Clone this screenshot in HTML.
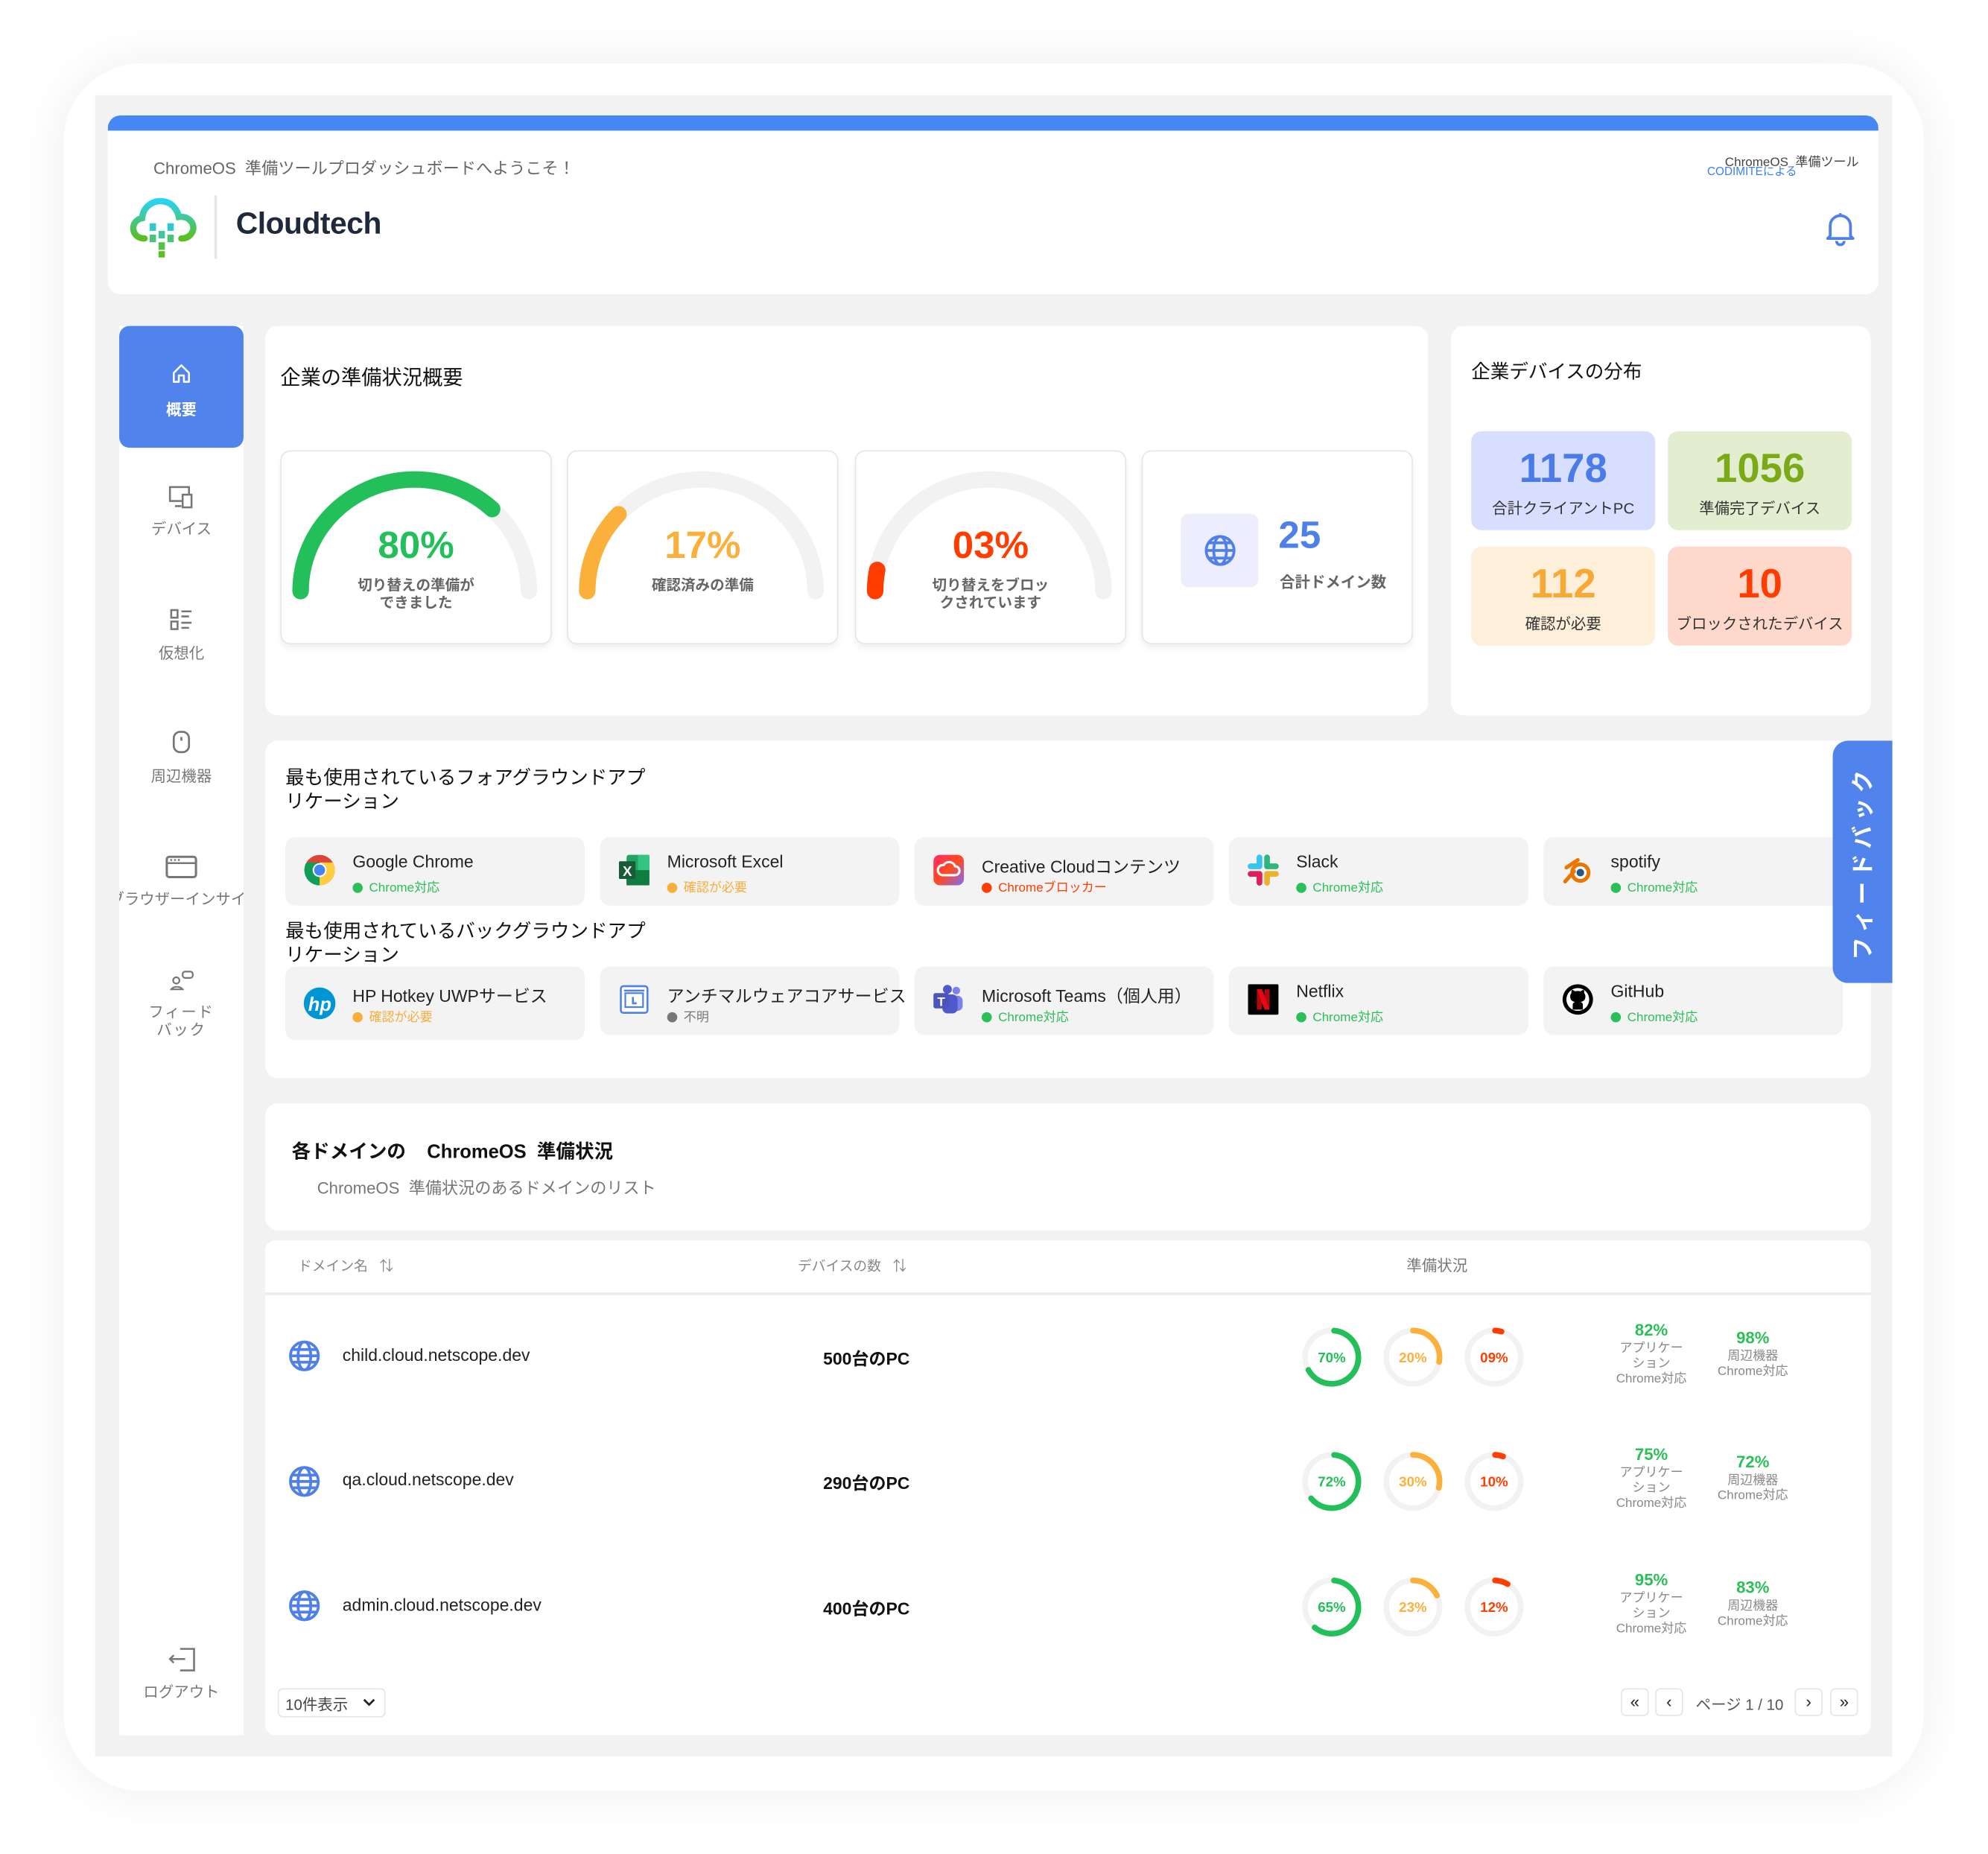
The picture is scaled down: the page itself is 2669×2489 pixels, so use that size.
<!DOCTYPE html>
<html><head><meta charset="utf-8">
<style>
*{margin:0;padding:0;box-sizing:border-box}
html,body{width:2669px;height:2489px;overflow:hidden;background:#fff}
body{font-family:"Liberation Sans","Noto Sans CJK JP",sans-serif;color:#222}
#st{position:absolute;left:0;top:0;width:1563px;height:1458px;transform:scale(1.7028);transform-origin:0 0}
.a{position:absolute}
.card{position:absolute;background:#fff;border-radius:10px}
.t{position:absolute;white-space:nowrap}
.g{position:absolute;top:355px;width:214px;height:153px;border:1px solid #e6e6e6;border-radius:8px;background:#fff;box-shadow:0 3px 5px rgba(0,0,0,.06)}
.g .p{position:absolute;left:0;width:100%;text-align:center;top:58px;font-size:30px;font-weight:bold}
.g .l{position:absolute;left:0;width:100%;text-align:center;top:99px;font-size:11.5px;color:#666;font-weight:bold;line-height:14px}
.tile{position:absolute;width:145px;height:78px;border-radius:8px;text-align:center}
.tile b{display:block;font-size:32px;margin-top:10px;line-height:38px}
.tile span{display:block;font-size:12px;color:#333;margin-top:4px}
.app{position:absolute;width:236px;background:#f3f3f3;border-radius:8px}
.app .n{position:absolute;left:53px;top:12px;font-size:13.5px;color:#222;white-space:nowrap}
.app .s{position:absolute;left:53px;top:31px;font-size:10px;white-space:nowrap}
.app .s i{display:inline-block;width:8px;height:8px;border-radius:50%;margin-right:5px;vertical-align:-1px}
.app svg{position:absolute;left:14px;top:13px}
.gr{color:#2bbf57}.gr i{background:#2bbf57}
.or{color:#f9ad3a}.or i{background:#f9ad3a}
.rd{color:#ff3d00}.rd i{background:#ff3d00}
.gy{color:#777}.gy i{background:#777}
.nav{position:absolute;left:94px;width:98px;text-align:center;font-size:12px;color:#777}
.st{position:absolute;text-align:center;font-size:10px;color:#888;line-height:12px;width:70px}
.st b{display:block;font-size:13px;color:#2bbf57;margin-bottom:3px}
.pg{position:absolute;top:1331px;width:22px;height:22px;border:1px solid #e6e6e6;border-radius:4px;text-align:center;font-size:13px;line-height:20px;color:#222;background:#fff}
</style></head><body>
<div id="st">
<div class="a" style="left:50px;top:50px;width:1467px;height:1362px;border-radius:62px;background:#fff;box-shadow:0 0 40px rgba(0,0,0,.07)"></div>
<div class="a" style="left:75px;top:75px;width:1417px;height:1310px;background:#f2f2f2"></div>

<div class="card" style="left:85px;top:91px;width:1396px;height:141px;overflow:hidden">
  <div class="a" style="left:0;top:0;width:100%;height:12px;background:#4487f5"></div>
</div>
<div class="t" style="left:121px;top:122px;font-size:13px;color:#666">ChromeOS &nbsp;準備ツールプロダッシュボードへようこそ！</div>
<svg class="a" style="left:100px;top:154px" width="56" height="50" viewBox="0 0 56 50">
 <defs><linearGradient id="lg" x1="0" y1="0" x2="0" y2="1"><stop offset="0" stop-color="#29d3f2"/><stop offset="1" stop-color="#5cbe21"/></linearGradient></defs>
 <path d="M14 34 C3 34 2 20 12 18 C13 8 22 3 30 5 C36 6 40 12 41 17 C50 16 55 24 51 30 C49 33 46 34 43 34" fill="none" stroke="url(#lg)" stroke-width="5" stroke-linecap="round"/>
 <rect x="18" y="22" width="5" height="6" fill="#32c8d0"/><rect x="32" y="22" width="5" height="6" fill="#32c8d0"/>
 <rect x="25" y="28" width="5" height="6" fill="#3fc7a0"/><rect x="18" y="31" width="5" height="6" fill="#47c479"/><rect x="32" y="31" width="5" height="6" fill="#47c479"/>
 <rect x="25" y="37" width="5" height="6" fill="#56c04a"/><rect x="25" y="44" width="5" height="5" fill="#5cbe21"/>
</svg>
<div class="a" style="left:169px;top:154px;width:2px;height:50px;background:#e5e5e5"></div>
<div class="t" style="left:186px;top:163px;font-size:24px;color:#1e2a3b;font-weight:bold;letter-spacing:-.3px">Cloudtech</div>
<div class="t" style="left:1360px;top:119px;font-size:10px;color:#444">ChromeOS &nbsp;準備ツール</div>
<div class="t" style="left:1346px;top:128px;font-size:9px;color:#3b7ff0">CODIMITEによる</div>
<svg class="a" style="left:1438px;top:166px" width="26" height="28" viewBox="0 0 26 28"><path d="M5 20 V12 A8 8 0 0 1 21 12 V20 L23 22 H3 Z" fill="none" stroke="#4f80ea" stroke-width="2.2" stroke-linejoin="round"/><path d="M10 24 A3 3 0 0 0 16 24" fill="none" stroke="#4f80ea" stroke-width="2.2"/><path d="M13 2v2" stroke="#4f80ea" stroke-width="2"/></svg>

<div class="a" style="left:94px;top:257px;width:98px;height:1111px;background:#fff"></div>
<div class="a" style="left:94px;top:257px;width:98px;height:96px;background:#5083ec;border-radius:8px"></div>
<svg class="a" style="left:135px;top:286px" width="16" height="16" viewBox="0 0 16 16"><path d="M2 8 L8 2 L14 8 V15 H10 V10 H6 V15 H2 Z" fill="none" stroke="#fff" stroke-width="1.5" stroke-linejoin="round"/></svg>
<div class="nav" style="top:314px;color:#fff;font-weight:bold">概要</div>
<svg class="a" style="left:133px;top:383px" width="20" height="18" viewBox="0 0 20 18"><rect x="1" y="1" width="15" height="11" fill="none" stroke="#777" stroke-width="1.5"/><rect x="11" y="7" width="7" height="10" fill="#fff" stroke="#777" stroke-width="1.5"/><path d="M5 16h5" stroke="#777" stroke-width="1.5"/></svg>
<div class="nav" style="top:408px">デバイス</div>
<svg class="a" style="left:134px;top:480px" width="18" height="18" viewBox="0 0 18 18"><rect x="1" y="1" width="5" height="6" fill="none" stroke="#777" stroke-width="1.5"/><rect x="1" y="10" width="5" height="6" fill="none" stroke="#777" stroke-width="1.5"/><path d="M9 2h8M9 6h6M9 11h8M9 15h6" stroke="#777" stroke-width="1.5"/></svg>
<div class="nav" style="top:506px">仮想化</div>
<svg class="a" style="left:135px;top:576px" width="16" height="18" viewBox="0 0 16 18"><rect x="2" y="1" width="12" height="16" rx="5" fill="none" stroke="#777" stroke-width="1.6"/><path d="M8 5v3" stroke="#777" stroke-width="1.6"/></svg>
<div class="nav" style="top:603px">周辺機器</div>
<svg class="a" style="left:130px;top:674px" width="26" height="20" viewBox="0 0 26 20"><rect x="1.5" y="1.5" width="23" height="16" rx="2" fill="none" stroke="#777" stroke-width="1.8"/><path d="M1.5 6.5h23" stroke="#777" stroke-width="1.5"/><circle cx="5" cy="4" r=".8" fill="#777"/><circle cx="8" cy="4" r=".8" fill="#777"/><circle cx="11" cy="4" r=".8" fill="#777"/></svg>
<div class="a" style="left:94px;top:699px;width:98px;height:18px;overflow:hidden"><div class="t" style="left:-8px;top:1px;font-size:12px;color:#777">ブラウザーインサイト</div></div>
<svg class="a" style="left:134px;top:764px" width="20" height="18" viewBox="0 0 20 18"><circle cx="5" cy="9" r="2.5" fill="none" stroke="#777" stroke-width="1.3"/><path d="M1 16 A5 3.5 0 0 1 10 16 Z" fill="none" stroke="#777" stroke-width="1.3"/><rect x="10" y="2" width="8" height="5" rx="2" fill="none" stroke="#777" stroke-width="1.3"/></svg>
<div class="nav" style="top:791px;line-height:14px;letter-spacing:1px">フィード<br>バック</div>
<svg class="a" style="left:133px;top:1298px" width="22" height="20" viewBox="0 0 22 20"><path d="M9 2h11v17H9" fill="none" stroke="#777" stroke-width="1.5"/><path d="M1 10h12M4 7l-3 3 3 3" fill="none" stroke="#777" stroke-width="1.5"/></svg>
<div class="nav" style="top:1325px">ログアウト</div>

<div class="card" style="left:209px;top:257px;width:917px;height:307px"></div>
<div class="t" style="left:221px;top:284px;font-size:16px;color:#111">企業の準備状況概要</div>

<div class="g" style="left:221px">
 <svg class="a" style="left:0;top:0" width="214" height="153"><path d="M15 110 A90 88 0 0 1 195 110" fill="none" stroke="#f2f2f2" stroke-width="13" stroke-linecap="round"/><path d="M15 110 A90 88 0 0 1 195 110" pathLength="100" fill="none" stroke="#23bf5a" stroke-width="13" stroke-linecap="round" stroke-dasharray="74 200"/></svg>
 <div class="p" style="color:#23bf5a">80%</div><div class="l">切り替えの準備が<br>できました</div></div>
<div class="g" style="left:447px">
 <svg class="a" style="left:0;top:0" width="214" height="153"><path d="M15 110 A90 88 0 0 1 195 110" fill="none" stroke="#f2f2f2" stroke-width="13" stroke-linecap="round"/><path d="M15 110 A90 88 0 0 1 195 110" pathLength="100" fill="none" stroke="#fbb03b" stroke-width="13" stroke-linecap="round" stroke-dasharray="24 200"/></svg>
 <div class="p" style="color:#fbb03b">17%</div><div class="l">確認済みの準備</div></div>
<div class="g" style="left:674px">
 <svg class="a" style="left:0;top:0" width="214" height="153"><path d="M15 110 A90 88 0 0 1 195 110" fill="none" stroke="#f2f2f2" stroke-width="13" stroke-linecap="round"/><path d="M15 110 A90 88 0 0 1 195 110" pathLength="100" fill="none" stroke="#ff3d00" stroke-width="13" stroke-linecap="round" stroke-dasharray="6 200"/></svg>
 <div class="p" style="color:#ff3d00">03%</div><div class="l">切り替えをブロッ<br>クされています</div></div>
<div class="g" style="left:900px">
 <div class="a" style="left:30px;top:49px;width:61px;height:58px;border-radius:6px;background:#eeedfd"></div>
 <svg class="a" style="left:48px;top:65px" width="26" height="26" viewBox="0 0 26 26"><g fill="none" stroke="#4f80ea" stroke-width="2.2"><circle cx="13" cy="13" r="11"/><ellipse cx="13" cy="13" rx="5" ry="11"/><path d="M2 13h22M4 7h18M4 19h18"/></g></svg>
 <div class="t" style="left:107px;top:50px;font-size:30px;font-weight:bold;color:#4f80ea">25</div>
 <div class="t" style="left:108px;top:94px;font-size:12px;color:#666;font-weight:bold">合計ドメイン数</div>
</div>

<div class="card" style="left:1144px;top:257px;width:331px;height:307px"></div>
<div class="t" style="left:1160px;top:282px;font-size:15px;color:#111">企業デバイスの分布</div>
<div class="tile" style="left:1160px;top:340px;background:#d7defe"><b style="color:#4a7be8">1178</b><span>合計クライアントPC</span></div>
<div class="tile" style="left:1315px;top:340px;background:#e3eed1"><b style="color:#7aab16">1056</b><span>準備完了デバイス</span></div>
<div class="tile" style="left:1160px;top:431px;background:#fdefd9"><b style="color:#f7a935">112</b><span>確認が必要</span></div>
<div class="tile" style="left:1315px;top:431px;background:#fdd8cb"><b style="color:#ff3d00">10</b><span>ブロックされたデバイス</span></div>

<div class="card" style="left:209px;top:584px;width:1266px;height:266px"></div>
<div class="t" style="left:225px;top:604px;font-size:15px;color:#111;line-height:19px">最も使用されているフォアグラウンドアプ<br>リケーション</div>
<div class="t" style="left:225px;top:725px;font-size:15px;color:#111;line-height:19px">最も使用されているバックグラウンドアプ<br>リケーション</div>

<div class="app" style="left:225px;top:660px;height:54px">
 <svg width="26" height="26" viewBox="0 0 26 26"><circle cx="13" cy="13" r="12" fill="#db4437"/><path d="M13 13 L2.6 19 A12 12 0 0 0 13 25 Z" fill="#0f9d58"/><path d="M13 13 L2.6 19 A12 12 0 0 1 2.6 7 L13 7 Z" fill="#0f9d58"/><path d="M13 13 L13 25 A12 12 0 0 0 23.4 7 L13 7Z" fill="#ffcd40"/><circle cx="13" cy="13" r="5.5" fill="#fff"/><circle cx="13" cy="13" r="4.3" fill="#4285f4"/></svg>
 <div class="n">Google Chrome</div><div class="s gr"><i></i>Chrome対応</div></div>
<div class="app" style="left:473px;top:660px;height:54px">
 <svg width="26" height="26" viewBox="0 0 26 26"><rect x="7" y="1" width="18" height="24" rx="2" fill="#21a366"/><rect x="7" y="13" width="18" height="12" fill="#107c41"/><rect x="16" y="1" width="9" height="12" fill="#33c481"/><rect x="1" y="6" width="13" height="14" rx="1" fill="#185c37"/><text x="4" y="17.5" font-size="11" fill="#fff" font-family="Liberation Sans" font-weight="bold">X</text></svg>
 <div class="n">Microsoft Excel</div><div class="s or"><i></i>確認が必要</div></div>
<div class="app" style="left:721px;top:660px;height:54px">
 <svg width="26" height="26" viewBox="0 0 26 26"><defs><linearGradient id="cc" x1="0" y1="0" x2="1" y2="1"><stop offset="0" stop-color="#ff2a6a"/><stop offset=".5" stop-color="#ff4b1f"/><stop offset="1" stop-color="#7b6cff"/></linearGradient></defs><rect x="1" y="1" width="24" height="24" rx="5" fill="url(#cc)"/><path d="M8 17 A4 4 0 0 1 9 9 A5 5 0 0 1 18 10 A3.5 3.5 0 0 1 18 17 Z" fill="none" stroke="#fff" stroke-width="1.8"/></svg>
 <div class="n">Creative Cloudコンテンツ</div><div class="s rd"><i></i>Chromeブロッカー</div></div>
<div class="app" style="left:969px;top:660px;height:54px">
 <svg width="26" height="26" viewBox="0 0 26 26"><g stroke-linecap="round" stroke-width="4.5"><path d="M10 3v7" stroke="#36c5f0"/><path d="M3 10h7" stroke="#36c5f0"/><path d="M16 3v7" stroke="#2eb67d"/><path d="M16 10h7" stroke="#2eb67d"/><path d="M3 16h7" stroke="#e01e5a"/><path d="M10 16v7" stroke="#e01e5a"/><path d="M16 16h7" stroke="#ecb22e"/><path d="M16 16v7" stroke="#ecb22e"/></g></svg>
 <div class="n">Slack</div><div class="s gr"><i></i>Chrome対応</div></div>
<div class="app" style="left:1217px;top:660px;height:54px">
 <svg width="26" height="26" viewBox="0 0 26 26"><circle cx="15" cy="15" r="8" fill="#ea7600"/><circle cx="15" cy="15" r="5" fill="#fff"/><circle cx="15" cy="15" r="3" fill="#265787"/><path d="M4 11 L13 5 M3 22 L10 14" stroke="#ea7600" stroke-width="3" stroke-linecap="round"/></svg>
 <div class="n">spotify</div><div class="s gr"><i></i>Chrome対応</div></div>

<div class="app" style="left:225px;top:762px;height:58px">
 <svg width="26" height="28" viewBox="0 0 26 28" style="top:15px"><circle cx="13" cy="14" r="12.5" fill="#0096d6"/><text x="4" y="20" font-size="15" font-style="italic" font-weight="bold" fill="#fff" font-family="Liberation Sans">hp</text></svg>
 <div class="n">HP Hotkey UWPサービス</div><div class="s or"><i></i>確認が必要</div></div>
<div class="app" style="left:473px;top:762px;height:54px">
 <svg width="26" height="26" viewBox="0 0 26 26"><rect x="2.5" y="2.5" width="21" height="21" rx="2" fill="#fff" stroke="#4f80ea" stroke-width="1.5"/><rect x="6" y="8" width="14" height="11" fill="none" stroke="#4f80ea" stroke-width="1.3"/><path d="M5 6h16" stroke="#4f80ea" stroke-width="1.5"/><path d="M12 11v5h3" fill="none" stroke="#4f80ea" stroke-width="1.5"/></svg>
 <div class="n">アンチマルウェアコアサービス</div><div class="s gy"><i></i>不明</div></div>
<div class="app" style="left:721px;top:762px;height:54px">
 <svg width="26" height="26" viewBox="0 0 26 26"><circle cx="19" cy="6" r="3" fill="#7b83eb"/><rect x="14" y="10" width="10" height="12" rx="4" fill="#7b83eb"/><circle cx="12" cy="5" r="3.5" fill="#5059c9"/><rect x="8" y="9" width="12" height="15" rx="4" fill="#5059c9"/><rect x="1" y="8" width="12" height="12" rx="1.5" fill="#4b53bc"/><text x="4" y="18" font-size="10" font-weight="bold" fill="#fff" font-family="Liberation Sans">T</text></svg>
 <div class="n">Microsoft Teams（個人用）</div><div class="s gr"><i></i>Chrome対応</div></div>
<div class="app" style="left:969px;top:762px;height:54px">
 <svg width="26" height="26" viewBox="0 0 26 26"><rect x="1" y="1" width="24" height="24" rx="1" fill="#000"/><rect x="8" y="5" width="4" height="16" fill="#b20710"/><rect x="14" y="5" width="4" height="16" fill="#b20710"/><path d="M8 5h4l6 16h-4z" fill="#e50914"/></svg>
 <div class="n">Netflix</div><div class="s gr"><i></i>Chrome対応</div></div>
<div class="app" style="left:1217px;top:762px;height:54px">
 <svg width="26" height="26" viewBox="0 0 26 26"><circle cx="13" cy="13" r="12" fill="#000"/><circle cx="13" cy="13" r="9" fill="#fff"/><path d="M9 21v-4c0-1 1-2 2-2-3-.5-4-2-4-4.5 0-1 .4-2 1-2.6-.2-.8 0-2 .3-2.5 1 0 2 .7 2.5 1.2a8 8 0 0 1 4.4 0c.5-.5 1.5-1.2 2.5-1.2.3.5.5 1.7.3 2.5.6.6 1 1.6 1 2.6 0 2.5-1 4-4 4.5 1 0 2 1 2 2v4z" fill="#000"/></svg>
 <div class="n">GitHub</div><div class="s gr"><i></i>Chrome対応</div></div>

<div class="a" style="left:1445px;top:584px;width:47px;height:191px;background:#5083ec;border-radius:12px 0 0 12px"></div>
<div class="t" style="left:1468px;top:680px;transform:translate(-50%,-50%) rotate(-90deg);font-size:18px;color:#fff;letter-spacing:4px;font-weight:bold">フィードバック</div>

<div class="card" style="left:209px;top:870px;width:1266px;height:100px"></div>
<div class="t" style="left:230px;top:897px;font-size:15px;font-weight:bold;color:#111">各ドメインの &nbsp;&nbsp;&nbsp;ChromeOS &nbsp;準備状況</div>
<div class="t" style="left:250px;top:926px;font-size:13px;color:#777">ChromeOS &nbsp;準備状況のあるドメインのリスト</div>

<div class="card" style="left:209px;top:978px;width:1266px;height:390px;border-radius:8px"></div>
<div class="t" style="left:235px;top:990px;font-size:11px;color:#888">ドメイン名 &nbsp;&nbsp;⇅</div>
<div class="t" style="left:629px;top:990px;font-size:11px;color:#888">デバイスの数 &nbsp;&nbsp;⇅</div>
<div class="t" style="left:1109px;top:989px;font-size:12px;color:#777">準備状況</div>
<div class="a" style="left:209px;top:1019px;width:1266px;height:2px;background:#ececec"></div>

<svg class="a" style="left:0;top:0" width="1563" height="1458">
 <defs><g id="glb" fill="none" stroke="#4f80ea" stroke-width="2.2"><circle cx="0" cy="0" r="11"/><ellipse cx="0" cy="0" rx="5" ry="11"/><path d="M-11 0h22M-9 -5h18M-9 5h18"/></g></defs>
 <use href="#glb" x="240" y="1069"/><use href="#glb" x="240" y="1168"/><use href="#glb" x="240" y="1266"/>
 <g fill="none" stroke-width="4.5" stroke-linecap="round">
  <circle cx="1050" cy="1070" r="21" stroke="#f2f2f2"/><circle cx="1114" cy="1070" r="21" stroke="#f2f2f2"/><circle cx="1178" cy="1070" r="21" stroke="#f2f2f2"/>
  <circle cx="1050" cy="1168" r="21" stroke="#f2f2f2"/><circle cx="1114" cy="1168" r="21" stroke="#f2f2f2"/><circle cx="1178" cy="1168" r="21" stroke="#f2f2f2"/>
  <circle cx="1050" cy="1267" r="21" stroke="#f2f2f2"/><circle cx="1114" cy="1267" r="21" stroke="#f2f2f2"/><circle cx="1178" cy="1267" r="21" stroke="#f2f2f2"/>
  <circle cx="1050" cy="1070" r="21" stroke="#23bf5a" pathLength="100" stroke-dasharray="66 200" transform="rotate(-85 1050 1070)"/>
  <circle cx="1114" cy="1070" r="21" stroke="#fbb03b" pathLength="100" stroke-dasharray="28 200" transform="rotate(-90 1114 1070)"/>
  <circle cx="1178" cy="1070" r="21" stroke="#ff3d00" pathLength="100" stroke-dasharray="4 200" transform="rotate(-88 1178 1070)"/>
  <circle cx="1050" cy="1168" r="21" stroke="#23bf5a" pathLength="100" stroke-dasharray="63 200" transform="rotate(-85 1050 1168)"/>
  <circle cx="1114" cy="1168" r="21" stroke="#fbb03b" pathLength="100" stroke-dasharray="29 200" transform="rotate(-90 1114 1168)"/>
  <circle cx="1178" cy="1168" r="21" stroke="#ff3d00" pathLength="100" stroke-dasharray="5 200" transform="rotate(-88 1178 1168)"/>
  <circle cx="1050" cy="1267" r="21" stroke="#23bf5a" pathLength="100" stroke-dasharray="60 200" transform="rotate(-85 1050 1267)"/>
  <circle cx="1114" cy="1267" r="21" stroke="#fbb03b" pathLength="100" stroke-dasharray="18 200" transform="rotate(-90 1114 1267)"/>
  <circle cx="1178" cy="1267" r="21" stroke="#ff3d00" pathLength="100" stroke-dasharray="8 200" transform="rotate(-88 1178 1267)"/>
 </g>
 <g font-family="Liberation Sans" font-size="11" font-weight="bold" text-anchor="middle">
  <text x="1050" y="1074" fill="#23bf5a">70%</text><text x="1114" y="1074" fill="#fbb03b">20%</text><text x="1178" y="1074" fill="#ff3d00">09%</text>
  <text x="1050" y="1172" fill="#23bf5a">72%</text><text x="1114" y="1172" fill="#fbb03b">30%</text><text x="1178" y="1172" fill="#ff3d00">10%</text>
  <text x="1050" y="1271" fill="#23bf5a">65%</text><text x="1114" y="1271" fill="#fbb03b">23%</text><text x="1178" y="1271" fill="#ff3d00">12%</text>
 </g>
</svg>
<div class="t" style="left:270px;top:1061px;font-size:13.5px;color:#222">child.cloud.netscope.dev</div>
<div class="t" style="left:270px;top:1159px;font-size:13.5px;color:#222">qa.cloud.netscope.dev</div>
<div class="t" style="left:270px;top:1258px;font-size:13.5px;color:#222">admin.cloud.netscope.dev</div>
<div class="t" style="left:649px;top:1060px;font-size:13.5px;font-weight:bold;color:#111">500台のPC</div>
<div class="t" style="left:649px;top:1158px;font-size:13.5px;font-weight:bold;color:#111">290台のPC</div>
<div class="t" style="left:649px;top:1257px;font-size:13.5px;font-weight:bold;color:#111">400台のPC</div>

<div class="st" style="left:1267px;top:1043px"><b>82%</b>アプリケー<br>ション<br>Chrome対応</div>
<div class="st" style="left:1347px;top:1049px"><b>98%</b>周辺機器<br>Chrome対応</div>
<div class="st" style="left:1267px;top:1141px"><b>75%</b>アプリケー<br>ション<br>Chrome対応</div>
<div class="st" style="left:1347px;top:1147px"><b>72%</b>周辺機器<br>Chrome対応</div>
<div class="st" style="left:1267px;top:1240px"><b>95%</b>アプリケー<br>ション<br>Chrome対応</div>
<div class="st" style="left:1347px;top:1246px"><b>83%</b>周辺機器<br>Chrome対応</div>

<div class="a" style="left:219px;top:1331px;width:85px;height:23px;border:1px solid #e6e6e6;border-radius:4px;background:#fff"></div>
<div class="t" style="left:225px;top:1335px;font-size:12px;color:#444">10件表示</div>
<svg class="a" style="left:286px;top:1338px" width="10" height="8" viewBox="0 0 10 8"><path d="M1 2l4 4 4-4" fill="none" stroke="#222" stroke-width="1.6"/></svg>
<div class="pg" style="left:1278px">«</div>
<div class="pg" style="left:1305px">‹</div>
<div class="t" style="left:1337px;top:1335px;font-size:12px;color:#555">ページ 1 / 10</div>
<div class="pg" style="left:1415px">›</div>
<div class="pg" style="left:1443px">»</div>
</div>
</body></html>
